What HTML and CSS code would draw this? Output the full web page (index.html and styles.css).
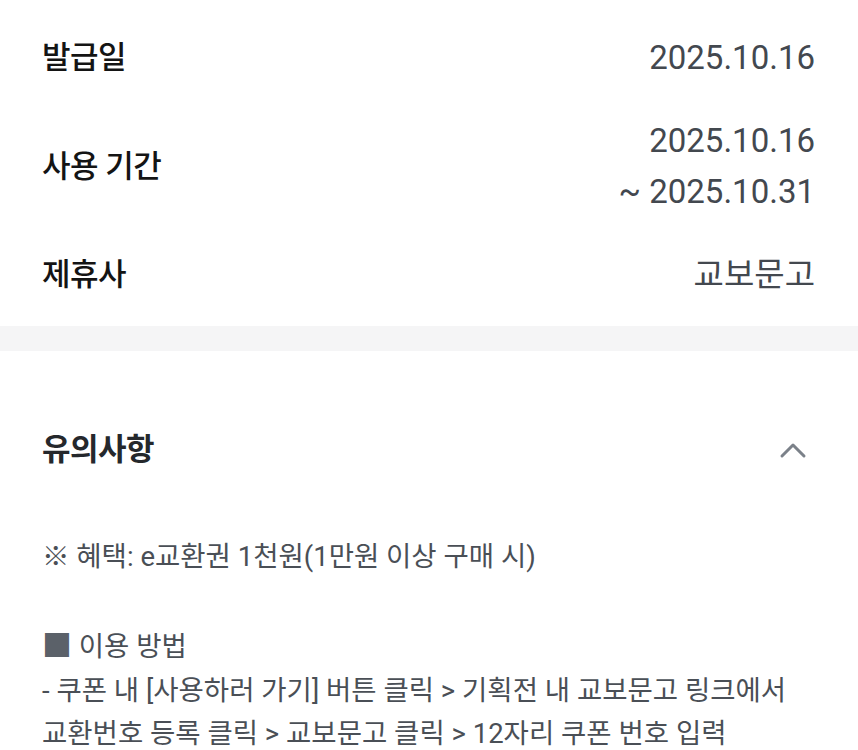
FILE: index.html
```html
<!DOCTYPE html>
<html lang="ko">
<head>
<meta charset="utf-8">
<link rel="stylesheet" href="styles.css">
</head>
<body>
<section class="info">
  <div class="row">
    <div class="label">발급일</div>
    <div class="value">2025.10.16</div>
  </div>
  <div class="row">
    <div class="label">사용 기간</div>
    <div class="value">2025.10.16<br>~ 2025.10.31</div>
  </div>
  <div class="row">
    <div class="label">제휴사</div>
    <div class="value">교보문고</div>
  </div>
</section>
<div class="divider"></div>
<section class="notice">
  <div class="notice-head">
    <h2 class="notice-title">유의사항</h2>
    <svg class="chevron" width="28" height="18" viewBox="0 0 28 18" aria-hidden="true">
      <path d="M3 15 L14 4 L25 15" fill="none" stroke="#7b8189" stroke-width="3" stroke-linecap="round" stroke-linejoin="round"/>
    </svg>
  </div>
  <div class="notice-body">
    <p>※ 혜택: e교환권 1천원(1만원 이상 구매 시)</p>
    <p class="blank">&nbsp;</p>
    <p><span class="sq">■</span> 이용 방법</p>
    <p>- 쿠폰 내 [사용하러 가기] 버튼 클릭 &gt; 기획전 내 교보문고 링크에서<br>교환번호 등록 클릭 &gt; 교보문고 클릭 &gt; 12자리 쿠폰 번호 입력</p>
  </div>
</section>
</body>
</html>
```
FILE: styles.css
```css
html, body {
  margin: 0;
  padding: 0;
  background: #ffffff;
}
body {
  font-family: Roboto, "Noto Sans CJK KR", sans-serif;
  width: 858px;
  overflow: hidden;
}
.info {
  padding: 32px 43px 26px 42px;
  display: flex;
  flex-direction: column;
  gap: 32px;
}
.row {
  display: flex;
  justify-content: space-between;
  align-items: center;
}
.label {
  font-size: 31px;
  font-weight: 500;
  line-height: 51px;
  color: #141414;
  letter-spacing: -0.5px;
}
.value {
  font-size: 33px;
  line-height: 51px;
  color: #43484f;
  text-align: right;
}
.divider {
  height: 25px;
  background: #f5f5f6;
}
.notice {
  padding: 79px 43px 0 42px;
}
.notice-head {
  display: flex;
  justify-content: space-between;
  align-items: center;
  height: 40px;
}
.notice-title {
  margin: 0;
  font-size: 31px;
  font-weight: 700;
  line-height: 40px;
  color: #25282c;
  letter-spacing: -0.5px;
}
.chevron {
  margin-right: 8px;
}
.notice-body {
  margin-top: 65px;
  font-size: 27.5px;
  font-weight: 400;
  line-height: 43.5px;
  color: #4a4f56;
}
.notice-body p {
  margin: 0;
}
.sq {
  font-family: "Noto Sans CJK KR", sans-serif;
  font-size: 30px;
  color: #5b6169;
}
```
